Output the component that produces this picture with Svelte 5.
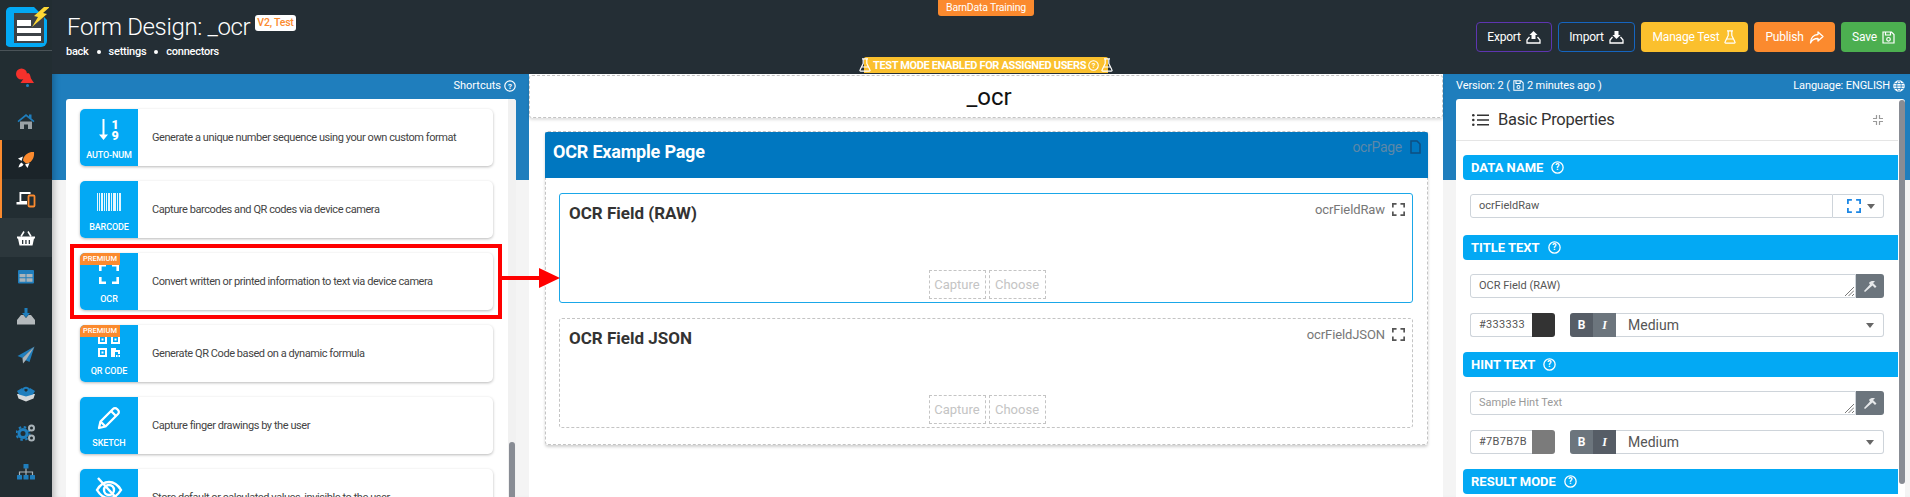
<script>
  const cards = [
    { id: 'autonum', label: 'AUTO-NUM', text: 'Generate a unique number sequence using your own custom format' },
    { id: 'barcode', label: 'BARCODE', text: 'Capture barcodes and QR codes via device camera' },
    { id: 'ocr', label: 'OCR', text: 'Convert written or printed information to text via device camera', premium: true },
    { id: 'qr', label: 'QR CODE', text: 'Generate QR Code based on a dynamic formula', premium: true },
    { id: 'sketch', label: 'SKETCH', text: 'Capture finger drawings by the user' },
    { id: 'hidden', label: 'HIDDEN', text: 'Store default or calculated values, invisible to the user' }
  ];
  const fields = [
    { title: 'OCR Field (RAW)', name: 'ocrFieldRaw', active: true },
    { title: 'OCR Field JSON', name: 'ocrFieldJSON', active: false }
  ];
  const navItems = ['home', 'rocket', 'devices', 'basket', 'table', 'inbox', 'plane', 'box', 'cogs', 'sitemap'];
  const bars = [[0,1],[2,1],[4,2],[7,1],[9,1],[11,2],[14,1],[16,3],[20,1],[22,2]];
</script>

{#snippet help(size = 12)}
  <svg class="help" width={size} height={size} viewBox="0 0 12 12">
    <circle cx="6" cy="6" r="5.2" fill="none" stroke="currentColor" stroke-width="1.2" />
    <text x="6" y="8.7" text-anchor="middle" font-size="8" font-weight="700" fill="currentColor">?</text>
  </svg>
{/snippet}

{#snippet corners(color, size)}
  <svg width={size} height={size} viewBox="0 0 20 20" fill="none" stroke={color} stroke-width="2.6">
    <path d="M1.3 7V1.3H7M13 1.3h5.7V7M18.7 13v5.7H13M7 18.7H1.3V13" />
  </svg>
{/snippet}

{#snippet cardIcon(id)}
  {#if id === 'autonum'}
    <div class="sort-num">
      <svg width="9" height="21" viewBox="0 0 9 21" fill="#fff">
        <path d="M3.500 0h2v15.500H9L4.500 21 0 15.500h3.500z" />
      </svg>
      <div class="digits"><span>1</span><span>9</span></div>
    </div>
  {:else if id === 'barcode'}
    <svg width="24" height="18" viewBox="0 0 24 18" fill="#e3f6ff">
      {#each bars as [x, w]}
        <rect {x} y="0" width={w} height="18" />
      {/each}
    </svg>
  {:else if id === 'ocr'}
    {@render corners('#fff', 20)}
  {:else if id === 'qr'}
    <svg width="22" height="22" viewBox="0 0 22 22" fill="#fff">
      <path fill-rule="evenodd" d="M0 0h9v9H0zM2 2v5h5V2zM3.5 3.5h2v2h-2zM13 0h9v9h-9zM15 2v5h5V2zM16.500 3.500h2v2h-2zM0 13h9v9H0zM2 15v5h5v-5zM3.500 16.500h2v2h-2z" />
      <path d="M13 13h5v2h4v4h-2v-2h-3v5h-4zM18 20h1.500v2H18zM20.500 20H22v2h-1.500z" />
    </svg>
  {:else if id === 'sketch'}
    <svg width="24" height="24" viewBox="0 0 24 24" fill="none" stroke="#fff" stroke-width="2.300" stroke-linejoin="round">
      <path d="M3.500 15.500 16 3a2.800 2.800 0 0 1 4 0l1 1a2.800 2.800 0 0 1 0 4L8.500 20.500 2 22z" />
      <path d="m14 5 5 5M3.500 15.500l5 5" />
    </svg>
  {:else}
    <svg width="28" height="28" viewBox="0 0 28 28" fill="none" stroke="#fff" stroke-width="2.400">
      <path d="M2 14c3-5 7-8 12-8s9 3 12 8c-3 5-7 8-12 8s-9-3-12-8z" />
      <path d="M9 14a5 5 0 0 1 10 0 5 5 0 0 1-10 0M3 2l22 24" />
    </svg>
  {/if}
{/snippet}

{#snippet navIcon(id)}
  <svg width="20" height="20" viewBox="0 0 20 20">
    {#if id === 'home'}
      <path d="M4 10.500h12V18h-4v-4.500H8V18H4z" fill="#9aa1a5" />
      <path d="M1.500 10 10 3l3 2.400V3.500h2.500v4L18.500 10l-1 1.200L10 5.200 2.500 11.200z" fill="#1f7ebd" />
    {:else if id === 'rocket'}
      <path d="M18 2c-5-.5-8.500 2-10.500 6l-.5 2.500 3 3 2.500-.5c4-2 6-5.500 5.500-11z" fill="#fb8a2e" />
      <path d="M7 6.500 2 8.500l3.500 2.500zM13.500 13 11.500 18 9 14.500zM5.500 12.500l2 2c-1 2-3 2.500-5 3 .5-2 1-4 3-5z" fill="#fff" />
    {:else if id === 'devices'}
      <path d="M3.500 3h11v2h-9.200v7H11v3.500H.500V13h3z" fill="#fff" />
      <rect x="12.500" y="6.500" width="6" height="11" rx="1" fill="none" stroke="#fb8a2e" stroke-width="1.800" />
    {:else if id === 'basket'}
      <path d="M1 8.500h18v2h-1l-1.500 7h-13L2 10.500H1zM6 12v4h1.300v-4zM9.300 12v4h1.300v-4zM12.700 12v4H14v-4z" fill="#fff" fill-rule="evenodd" />
      <path d="M5 8.500 8 3.500M15 8.500 12 3.500" stroke="#fff" stroke-width="1.500" />
    {:else if id === 'table'}
      <rect x="2" y="3" width="16" height="13.500" rx="1" fill="#1f7ebd" />
      <path d="M3.500 7h6v3.200h-6zM10.500 7h6v3.200h-6zM3.500 11.300h6v3.500h-6zM10.500 11.300h6v3.500h-6z" fill="#a9b3b9" />
    {:else if id === 'inbox'}
      <path d="M5 9h2.500l2.500 3 2.500-3H15l4 5v4.500H1V14z" fill="#b4b9bc" />
      <path d="M8.500 2h3v5h2.500L10 11.500 6 7h2.500z" fill="#1f7ebd" />
    {:else if id === 'plane'}
      <path d="M18.500 1.500 1.500 11l5 2z" fill="#1f7ebd" />
      <path d="M18.500 1.500 8 14.500l5.500 2.500z" fill="#1f7ebd" />
      <path d="M18.500 1.500 6.500 13 7 18.500l3-3.500z" fill="#a9b3b9" />
    {:else if id === 'box'}
      <path d="M1 10h18l-1.500 4.500L10 17.500 2.500 14.500z" fill="#d5d8da" />
      <path d="M1 7l5-3 4 4 4-4 5 3-2 3.500-7 2-7-2z" fill="#1f7ebd" />
      <path d="M7 6c1-3 5-3 6 0" fill="none" stroke="#1f7ebd" stroke-width="1.800" />
    {:else if id === 'cogs'}
      <circle cx="7" cy="10.500" r="4" fill="none" stroke="#1f7ebd" stroke-width="3" />
      <circle cx="7" cy="10.500" r="6.500" fill="none" stroke="#1f7ebd" stroke-width="2" stroke-dasharray="2.500 2.600" />
      <circle cx="15.500" cy="5" r="2.500" fill="none" stroke="#a9b3b9" stroke-width="2" />
      <circle cx="15.500" cy="15" r="2.500" fill="none" stroke="#a9b3b9" stroke-width="2" />
    {:else}
      <rect x="7.500" y="2" width="5" height="4.500" rx=".5" fill="#1f7ebd" />
      <rect x="1" y="13" width="5" height="4.500" rx=".5" fill="#1f7ebd" />
      <rect x="7.500" y="13" width="5" height="4.500" rx=".5" fill="#1f7ebd" />
      <rect x="14" y="13" width="5" height="4.500" rx=".5" fill="#1f7ebd" />
      <path d="M10 6.500V13M3.500 13v-3h13v3" fill="none" stroke="#a9b3b9" stroke-width="1.200" />
    {/if}
  </svg>
{/snippet}

{#snippet tray(up)}
  <svg width="15" height="14" viewBox="0 0 15 14" fill="none" stroke="#fff" stroke-width="1.300">
    <path d="M3.500 7 1 10v3h13v-3l-2.500-3" />
    <path d={up ? 'M5.500 9V5H3.500l4-4 4 4h-2v4z' : 'M5.500 1v4H3.500l4 4 4-4h-2V1z'} fill="#fff" stroke="none" />
  </svg>
{/snippet}

{#snippet flask()}
  <svg width="12" height="14" viewBox="0 0 12 14" fill="none" stroke="#fff" stroke-width="1.200" stroke-linejoin="round">
    <path d="M3 .8h6M4.200 1v4.500L1 12a.8.8 0 0 0 .7 1.200h8.600A.8.800 0 0 0 11 12L7.800 5.500V1M3 9h6" />
  </svg>
{/snippet}

{#snippet floppy(size = 13)}
  <svg width={size} height={size} viewBox="0 0 13 13" fill="none" stroke="#fff" stroke-width="1.200">
    <path d="M1 1h8.500L12 3.500V12H1zM3.500 1v3h5V1" />
    <circle cx="6.500" cy="8.300" r="1.800" />
  </svg>
{/snippet}

{#snippet wrench()}
  <svg width="13" height="13" viewBox="0 0 13 13" fill="#e6e8ea">
    <path d="M1 12 0 11l6-6.500-1-1.500C6.500 1 9 .5 11 1.500L9 3l3.500 3.500L11 8 8.500 5.500z" />
  </svg>
{/snippet}

{#snippet colorRow(hex, swatch, boldOn)}
  <div class="style-row">
    <div class="hex">{hex}</div>
    <div class="swatch" style="background: {swatch}"></div>
    <div class="bi" class:on={boldOn}>B</div>
    <div class="bi ital" class:on={!boldOn}>I</div>
    <div class="size">Medium<span class="caret"></span></div>
  </div>
{/snippet}

{#snippet textRow(text, placeholder)}
  <div class="text-row">
    <div class="text-input" class:placeholder>
      {text}
      <svg class="grip" width="9" height="9" viewBox="0 0 9 9" stroke="#555" stroke-width=".8"><path d="M9 0 0 9M9 3.500 3.500 9M9 7 7 9" /></svg>
    </div>
    <div class="tool">{@render wrench()}</div>
  </div>
{/snippet}

<div class="app">
  <aside class="sidebar">
    <div class="logo">
      <svg width="46" height="46" viewBox="0 0 46 46">
        <path d="M7 4h24l13 13v21a6 6 0 0 1-6 6H7a6 6 0 0 1-4-2V8a5 5 0 0 1 4-4z" fill="#03a9f4" />
        <rect x="11" y="10" width="30" height="30" fill="#3d4247" />
        <rect x="14" y="17" width="14" height="6" fill="#fff" />
        <rect x="14" y="25" width="24" height="5" fill="#fff" />
        <rect x="14" y="33" width="24" height="5" fill="#fff" />
        <path d="M41 4 47 4 40 10 44 11 29 24 35 14 31 13z" fill="#fdd835" />
      </svg>
    </div>
    <div class="bell">
      <svg width="22" height="22" viewBox="0 0 22 22">
        <circle cx="6.500" cy="7" r="5.500" fill="#f5312c" />
        <path d="M9 11c2-1 2-5 4-5s2.500 4 3 5.500l3 4.500H5.500z" fill="#f5312c" />
        <circle cx="12.500" cy="18.500" r="1.500" fill="#1f7ebd" />
      </svg>
    </div>
    {#each navItems as item}
      <div class="nav" class:active={item === 'rocket'} class:open={item === 'devices'} class:hover={item === 'basket'}>
        {@render navIcon(item)}
      </div>
    {/each}
  </aside>

  <div class="main">
    <header class="topbar">
      <div class="heading">
        <div class="title-line">
          <h1>Form Design: _ocr</h1>
          <span class="badge">V2, Test</span>
        </div>
        <div class="links"><span>back</span><i></i><span>settings</span><i></i><span>connectors</span></div>
      </div>
      <div class="training">BarnData Training</div>
      <div class="testmode">
        {@render flask()} TEST MODE ENABLED FOR ASSIGNED USERS {@render help(11)} {@render flask()}
      </div>
      <div class="actions">
        <button class="btn export">Export {@render tray(true)}</button>
        <button class="btn import">Import {@render tray(false)}</button>
        <button class="btn manage">Manage Test {@render flask()}</button>
        <button class="btn publish">Publish
          <svg width="15" height="13" viewBox="0 0 15 13" fill="none" stroke="#fff" stroke-width="1.300" stroke-linejoin="round"><path d="M9 1l5 4.500L9 10V7.500C5.500 7.500 3 8.500 1.500 12 1.500 7 4.500 3.500 9 3.500z" /></svg>
        </button>
        <button class="btn save">Save {@render floppy()}</button>
      </div>
    </header>

    <div class="workspace">
      <section class="col left">
        <div class="caption end">Shortcuts {@render help(12)}</div>
        <div class="panel">
          <div class="list">
            {#each cards as card}
              <div class="card">
                <div class="tile">
                  {#if card.premium}<span class="premium">PREMIUM</span>{/if}
                  <div class="glyph">{@render cardIcon(card.id)}</div>
                  <span class="tile-label">{card.label}</span>
                </div>
                <p>{card.text}</p>
              </div>
            {/each}
          </div>
          <div class="track"><div class="thumb-left"></div></div>
        </div>
      </section>

      <section class="col center">
        <div class="form-title">_ocr</div>
        <div class="page">
          <div class="page-head">
            <h2>OCR Example Page</h2>
            <span class="page-name">ocrPage
              <svg width="11" height="14" viewBox="0 0 11 14" fill="none" stroke="#0e4f80" stroke-width="1.500"><path d="M1 1h6l3 3v9H1z" /></svg>
            </span>
          </div>
          {#each fields as field}
            <div class="field" class:active={field.active}>
              <div class="field-head">
                <h3>{field.title}</h3>
                <span class="field-name">{field.name} {@render corners('#555', 13)}</span>
              </div>
              <div class="capture"><span>Capture</span><span>Choose</span></div>
            </div>
          {/each}
        </div>
      </section>

      <section class="col right">
        <div class="caption between">
          <span class="version">Version: 2 ( {@render floppy(11)} 2 minutes ago )</span>
          <span class="version">Language: ENGLISH
            <svg width="12" height="12" viewBox="0 0 12 12" fill="none" stroke="#fff" stroke-width="1"><circle cx="6" cy="6" r="5.300" fill="#fff" /><path d="M.5 6h11M6 .5c-3 3-3 8 0 11M6 .5c3 3 3 8 0 11M1.300 3.500h9.400M1.300 8.500h9.400" stroke="#1f7ebd" stroke-width=".8" /></svg>
          </span>
        </div>
        <div class="panel props">
          <div class="props-body">
            <div class="props-head">
              <svg width="17" height="12" viewBox="0 0 17 12" fill="#333"><circle cx="1.300" cy="1.300" r="1.300" /><circle cx="1.300" cy="6" r="1.300" /><circle cx="1.300" cy="10.700" r="1.300" /><path d="M5 .5h12v1.600H5zM5 5.200h12v1.600H5zM5 9.900h12v1.600H5z" /></svg>
              <span>Basic Properties</span>
              <svg class="collapse" width="10" height="10" viewBox="0 0 10 10" fill="none" stroke="#9a9a9a" stroke-width="1.200"><path d="M3.500 0v3.500H0M6.500 0v3.500H10M3.500 10V6.500H0M6.500 10V6.500H10" /></svg>
            </div>

            <div class="bar">DATA NAME {@render help(13)}</div>
            <div class="data-row">
              <div class="text-input">ocrFieldRaw</div>
              <div class="type-pick">{@render corners('#1e88e5', 14)}<span class="caret"></span></div>
            </div>

            <div class="bar">TITLE TEXT {@render help(13)}</div>
            {@render textRow('OCR Field (RAW)', false)}
            {@render colorRow('#333333', '#333333', true)}

            <div class="bar">HINT TEXT {@render help(13)}</div>
            {@render textRow('Sample Hint Text', true)}
            {@render colorRow('#7B7B7B', '#7b7b7b', false)}

            <div class="bar">RESULT MODE {@render help(13)}</div>
          </div>
          <div class="track-right"><div class="thumb-right"></div></div>
        </div>
      </section>

      <!-- annotation drawn on top of the screenshot -->
      <div class="callout"></div>
      <svg class="callout-arrow" width="58" height="22" viewBox="0 0 58 22" fill="#f00">
        <path d="M0 9h37V1l21 10-21 10v-8H0z" />
      </svg>
    </div>
  </div>
</div>

<style>
  :global(body) {
    margin: 0;
    font-family: Roboto, "Liberation Sans", sans-serif;
    overflow: hidden;
  }
  h1, h2, h3, p { margin: 0; }
  svg { flex: none; display: block; }
  .app {
    display: flex;
    width: 1910px;
    height: 497px;
    overflow: hidden;
  }

  /* sidebar */
  .sidebar {
    width: 52px;
    flex: none;
    background: #222d32;
    position: relative;
    z-index: 2;
  }
  .logo {
    height: 51px;
    box-sizing: border-box;
    padding: 3px 0 0 3px;
    border-bottom: 1px solid #4a5358;
  }
  .bell {
    height: 50px;
    display: flex;
    align-items: center;
    justify-content: center;
    padding-top: 4px;
    box-sizing: border-box;
  }
  .nav {
    height: 39px;
    display: flex;
    align-items: center;
    justify-content: center;
  }
  .nav.active { background: #1b2429; box-shadow: inset 2px 0 0 #fb8a2e; }
  .nav.open { box-shadow: inset 2px 0 0 #fb8a2e; }
  .nav.hover { background: #2c373c; }

  /* top bar */
  .main {
    flex: 1;
    min-width: 0;
    display: flex;
    flex-direction: column;
  }
  .topbar {
    height: 74px;
    flex: none;
    background: #242e35;
    color: #fff;
    position: relative;
    display: flex;
    justify-content: space-between;
    box-sizing: border-box;
    padding: 0 4px 0 15px;
  }
  .title-line {
    display: flex;
    align-items: flex-start;
    gap: 5px;
    margin-top: 12px;
  }
  h1 {
    font-size: 24px;
    font-weight: 300;
    line-height: 30px;
    letter-spacing: -.35px;
  }
  .badge {
    background: #fff;
    color: #fb8a2e;
    border-radius: 3px;
    font-size: 10.5px;
    font-weight: 500;
    padding: 0 2px;
    line-height: 16px;
    margin-top: 3px;
    letter-spacing: -.2px;
  }
  .links {
    display: flex;
    align-items: center;
    font-size: 11px;
    font-weight: 500;
    margin: 3px 0 0 -1px;
    gap: 8px;
    line-height: 14px;
    letter-spacing: -.25px;
  }
  .links i {
    width: 4px;
    height: 4px;
    border-radius: 50%;
    background: #fff;
  }
  .training {
    position: absolute;
    top: 0;
    left: 886px;
    width: 96px;
    height: 16px;
    background: #fb8a2e;
    border-radius: 0 0 3px 3px;
    font-size: 10.5px;
    line-height: 15px;
    text-align: center;
    letter-spacing: -.2px;
  }
  .testmode {
    position: absolute;
    top: 57px;
    left: 812px;
    width: 244px;
    height: 16px;
    background: #fbc02d;
    border-radius: 2px 2px 0 0;
    font-size: 11px;
    font-weight: 700;
    letter-spacing: -.35px;
    display: flex;
    align-items: center;
    justify-content: center;
    gap: 2px;
    white-space: nowrap;
  }
  .actions {
    display: flex;
    gap: 6px;
    margin-top: 22px;
    height: 30px;
  }
  .btn {
    font: 400 12px Roboto, sans-serif;
    letter-spacing: -.2px;
    color: #fff;
    background: transparent;
    border: 1px solid transparent;
    border-radius: 4px;
    display: flex;
    align-items: center;
    justify-content: center;
    gap: 5px;
    padding: 0;
    box-sizing: border-box;
  }
  .export { width: 76px; border-color: #5e35b1; }
  .import { width: 77px; border-color: #1565c0; }
  .manage { width: 107px; background: #fbc02d; }
  .publish { width: 81px; background: #fb8a2e; }
  .save { width: 65px; background: #4caf50; }

  /* three columns over the blue band */
  .workspace {
    flex: 1;
    min-height: 0;
    position: relative;
    display: flex;
    gap: 13px;
    padding: 0 5px 0 14px;
    background: linear-gradient(#1f7ebd 106px, #f4f4f4 106px);
    box-shadow: inset 7px 0 6px -5px rgba(0, 0, 0, .25);
  }
  .col {
    display: flex;
    flex-direction: column;
    min-width: 0;
  }
  .left { width: 450px; flex: none; }
  .center { width: 914px; flex: none; background: #fff; padding-top: 1px; box-sizing: border-box; }
  .right { flex: 1; }
  .caption {
    height: 25px;
    flex: none;
    display: flex;
    align-items: center;
    color: #fff;
    font-size: 11px;
    padding-bottom: 2px;
    box-sizing: border-box;
  }
  .caption.end { justify-content: flex-end; gap: 3px; }
  .caption.between { justify-content: space-between; }
  .version { display: flex; align-items: center; gap: 3px; letter-spacing: -.1px; }
  .panel {
    flex: 1;
    min-height: 0;
    background: #fff;
    display: flex;
    border-radius: 3px 3px 0 0;
    overflow: hidden;
  }

  /* shortcut cards */
  .list {
    flex: 1;
    min-width: 0;
    padding: 10px 15px 0 14px;
    display: flex;
    flex-direction: column;
    gap: 15px;
  }
  .card {
    height: 57px;
    flex: none;
    display: flex;
    align-items: center;
    background: #fff;
    border-radius: 5px;
    box-shadow: 0 1px 3px rgba(0, 0, 0, .28);
  }
  .card p {
    font-size: 11px;
    color: #444;
    padding-left: 14px;
    letter-spacing: -.43px;
    white-space: nowrap;
  }
  .tile {
    width: 58px;
    height: 57px;
    flex: none;
    background: #03a9f4;
    border-radius: 5px 0 0 5px;
    color: #fff;
    display: flex;
    flex-direction: column;
    align-items: center;
    position: relative;
  }
  .glyph {
    height: 38px;
    padding-top: 3px;
    box-sizing: border-box;
    display: flex;
    align-items: center;
    justify-content: center;
  }
  .sort-num { display: flex; gap: 3px; align-items: center; }
  .digits {
    display: flex;
    flex-direction: column;
    font-size: 12.5px;
    font-weight: 900;
    line-height: 11px;
    text-align: center;
  }
  .tile-label {
    font-size: 9px;
    font-weight: 500;
    line-height: 14px;
    margin-top: 1px;
    letter-spacing: -.1px;
  }
  .premium {
    position: absolute;
    left: 0;
    top: 0;
    width: 40px;
    height: 12px;
    background: #fb8a2e;
    border-radius: 5px 0 0 0;
    font-size: 7.5px;
    font-weight: 500;
    line-height: 12px;
    text-align: center;
    z-index: 1;
  }
  .track { width: 8px; flex: none; background: #f1f1f1; }
  .thumb-left {
    margin: 343px 0 0 1px;
    width: 6px;
    height: 60px;
    background: #888c94;
    border-radius: 3px;
  }

  /* form preview */
  .form-title {
    height: 43px;
    flex: none;
    box-sizing: border-box;
    border: 1px dashed #c4c4c4;
    border-radius: 3px;
    display: flex;
    align-items: center;
    justify-content: center;
    padding-left: 6px;
    font-size: 24px;
    color: #111;
    box-shadow: 0 2px 3px rgba(0, 0, 0, .12);
  }
  .page {
    margin: 13px 15px 0 16px;
    height: 314px;
    box-sizing: border-box;
    border: 1px dashed #c4c4c4;
    border-radius: 3px;
    box-shadow: 0 2px 3px rgba(0, 0, 0, .18);
    display: flex;
    flex-direction: column;
    gap: 15px;
  }
  .page-head {
    height: 46px;
    flex: none;
    background: #0077c0;
    border-radius: 2px 2px 0 0;
    color: #fff;
    display: flex;
    justify-content: space-between;
    padding: 0 7px 0 8px;
    margin: 0 -1px;
  }
  h2 {
    font-size: 18px;
    font-weight: 700;
    line-height: 21px;
    margin-top: 9px;
    letter-spacing: -.2px;
  }
  .page-name {
    display: flex;
    align-items: center;
    gap: 8px;
    height: 14px;
    margin-top: 8px;
    font-size: 14px;
    letter-spacing: -.3px;
    color: #5c88a8;
  }
  .field {
    height: 110px;
    flex: none;
    box-sizing: border-box;
    margin: 0 14px 0 13px;
    border: 1px dashed #c4c4c4;
    border-radius: 3px;
    padding: 9px 7px 3px 9px;
    display: flex;
    flex-direction: column;
    justify-content: space-between;
  }
  .field.active { border: 1px solid #1aa7e8; }
  .field-head { display: flex; justify-content: space-between; }
  h3 {
    font-size: 17px;
    font-weight: 700;
    line-height: 20px;
    color: #333;
  }
  .field-name {
    display: flex;
    align-items: center;
    gap: 7px;
    height: 13px;
    font-size: 13px;
    letter-spacing: -.1px;
    color: #777;
  }
  .capture {
    display: flex;
    justify-content: center;
    gap: 3px;
  }
  .capture span {
    width: 57px;
    height: 29px;
    box-sizing: border-box;
    border: 1px dashed #c4c4c4;
    color: #c4c4c4;
    font-size: 13px;
    line-height: 27px;
    text-align: center;
  }

  /* properties */
  .props-body { flex: 1; min-width: 0; }
  .props-head {
    height: 42px;
    box-sizing: border-box;
    border-bottom: 1px solid #e5e5e5;
    display: flex;
    align-items: center;
    gap: 9px;
    padding: 0 15px 0 16px;
    font-size: 16.5px;
    letter-spacing: -.25px;
    color: #333;
    margin-bottom: 14px;
  }
  .collapse { margin-left: auto; }
  .bar {
    margin-left: 7px;
    height: 25px;
    background: #03a9f4;
    border-radius: 4px 0 0 4px;
    color: #fff;
    font-size: 13px;
    font-weight: 700;
    display: flex;
    align-items: center;
    gap: 8px;
    padding-left: 8px;
    margin-bottom: 14px;
  }
  .text-row, .style-row { margin-left: 14px; margin-right: 14px; }
  .data-row { margin-left: 14px; margin-right: 14px; display: flex; height: 24px; margin-bottom: 17px; }
  .text-row { display: flex; height: 24px; margin-bottom: 15px; }
  .text-input {
    flex: 1;
    min-width: 0;
    box-sizing: border-box;
    position: relative;
    border: 1px solid #ced4da;
    border-radius: 3px 0 0 3px;
    font-size: 11px;
    color: #555;
    line-height: 22px;
    padding-left: 8px;
  }
  .text-input.placeholder { color: #999; }
  .grip { position: absolute; right: 1px; bottom: 1px; }
  .type-pick {
    width: 51px;
    box-sizing: border-box;
    border: 1px solid #ced4da;
    border-left: 0;
    border-radius: 0 3px 3px 0;
    display: flex;
    align-items: center;
    gap: 6px;
    padding-left: 14px;
  }
  .caret {
    border: 4px solid transparent;
    border-top: 5px solid #666;
    border-bottom: 0;
  }
  .tool {
    width: 28px;
    background: #6c757d;
    border-radius: 0 3px 3px 0;
    display: flex;
    align-items: center;
    justify-content: center;
  }
  .style-row {
    display: flex;
    height: 24px;
    margin-bottom: 15px;
  }
  .hex {
    width: 62px;
    box-sizing: border-box;
    border: 1px solid #ced4da;
    border-right: 0;
    border-radius: 3px 0 0 3px;
    font-size: 11px;
    color: #555;
    line-height: 22px;
    padding-left: 8px;
    letter-spacing: .3px;
  }
  .swatch {
    width: 23px;
    border-radius: 0 3px 3px 0;
    margin-right: 15px;
  }
  .bi {
    width: 23px;
    background: #6c757d;
    color: #fff;
    font-size: 12px;
    font-weight: 700;
    line-height: 24px;
    text-align: center;
  }
  .bi:not(.ital) { border-radius: 3px 0 0 3px; }
  .bi.ital { font-style: italic; font-family: "Liberation Serif", serif; }
  .bi.on { background: #565d66; }
  .size {
    flex: 1;
    box-sizing: border-box;
    border: 1px solid #ced4da;
    border-left: 0;
    border-radius: 0 3px 3px 0;
    font-size: 14px;
    color: #555;
    display: flex;
    align-items: center;
    justify-content: space-between;
    padding: 0 9px 0 12px;
  }
  .track-right { width: 7px; flex: none; }
  .thumb-right {
    margin: 1px 0 0 1px;
    width: 6px;
    height: 384px;
    background: #888c94;
    border-radius: 3px;
  }

  /* red annotation */
  .callout {
    position: absolute;
    left: 18px;
    top: 170px;
    width: 432px;
    height: 75px;
    box-sizing: border-box;
    border: 4px solid #f00;
    pointer-events: none;
  }
  .callout-arrow {
    position: absolute;
    left: 450px;
    top: 193px;
  }
</style>
